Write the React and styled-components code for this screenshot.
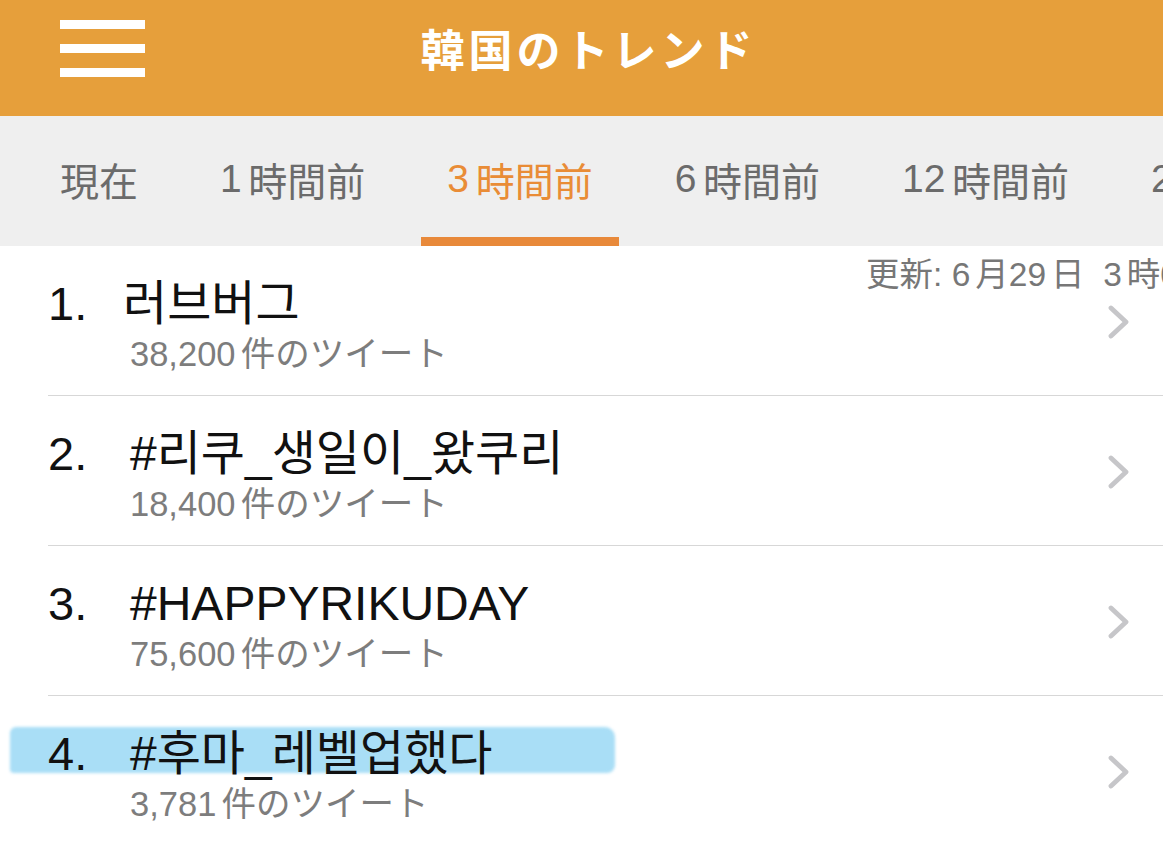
import React from "react";
import styled, { createGlobalStyle } from "styled-components";

const GlobalStyle = createGlobalStyle`
  body {
    margin: 0;
    overflow: hidden;
    background: #fff;
    font-family: "Liberation Sans", "Noto Sans CJK JP", "Noto Sans CJK KR", sans-serif;
  }
`;

// layout ===================================================================

const Page = styled.div`
  width: 1163px;
  height: 842px;
  overflow: hidden;
  background: #fff;
`;

const Header = styled.header`
  height: 116px;
  background: #e69f3b;
  display: grid;
  grid-template-columns: 1fr auto 1fr;
  align-items: center;
`;

const MenuButton = styled.div`
  width: 85px;
  margin-left: 60px;
  margin-top: -19px;
  display: flex;
  flex-direction: column;
  gap: 15px;
`;

const MenuBar = styled.span`
  display: block;
  height: 9px;
  background: #fff;
`;

const Title = styled.h1`
  margin: 0 0 20px 14px;
  color: #fff;
  font-size: 44px;
  font-weight: 700;
  letter-spacing: 4px;
  font-family: "Noto Sans CJK JP", sans-serif;
`;

const TabBar = styled.nav`
  height: 130px;
  background: #efefef;
  display: flex;
  gap: 30px;
  padding-left: 34px;
  white-space: nowrap;
  overflow: hidden;
`;

const Tab = styled.div`
  position: relative;
  display: flex;
  align-items: center;
  padding: 0 26px 4px;
  font-size: 39px;
  color: ${(p) => (p.$active ? "#e98c36" : "#6b6b6b")};

  &::after {
    content: "";
    display: ${(p) => (p.$active ? "block" : "none")};
    position: absolute;
    left: 0;
    right: 0;
    bottom: 0;
    height: 9px;
    background: #e8893a;
  }
`;

// iOS puts a little air between latin digits and the kana/kanji after them
const Num = styled.span`
  margin-right: ${(p) => p.$gap || "0.17em"};
`;

const List = styled.div`
  position: relative;
`;

const Updated = styled.div`
  position: absolute;
  top: 1px;
  left: 866px;
  font-size: 33.5px;
  color: #777;
  white-space: nowrap;
  z-index: 2;
`;

const Row = styled.div`
  position: relative;
  height: 150px;
  margin-left: 48px;
  display: flex;
  align-items: flex-start;
  border-bottom: ${(p) => (p.$last ? "none" : "1.5px solid #d7d7d7")};
  box-sizing: border-box;
`;

const Marker = styled.span`
  position: absolute;
  left: -38px;
  top: 31px;
  width: 605px;
  height: 46px;
  background: #a9def6;
  border-radius: 6px 10px 8px 4px;
  filter: blur(1.5px);
  z-index: 0;
`;

const Entry = styled.div`
  position: relative;
  z-index: 1;
  display: grid;
  grid-template-columns: 82px auto;
  padding-top: 32px;
`;

const Rank = styled.span`
  font-size: 47px;
  line-height: 52px;
  color: #111;
`;

const Info = styled.div`
  display: flex;
  flex-direction: column;
`;

const TrendName = styled.span`
  font-size: 48px;
  line-height: 52px;
  color: #111;
  margin-left: ${(p) => (p.$tight ? "-7px" : "0")};
`;

const Count = styled.span`
  font-size: 34.5px;
  line-height: 48px;
  color: #7d7d7d;
`;

const Chevron = styled.svg`
  align-self: center;
  margin-left: auto;
  margin-right: 32px;
  margin-top: 2px;
  width: 24px;
  height: 34px;
`;

// data =====================================================================

const tabs = [
  ["", "現在"],
  ["1", "時間前"],
  ["3", "時間前"],
  ["6", "時間前"],
  ["12", "時間前"],
  ["24", "時間前"],
];

const trends = [
  { name: "러브버그", count: "38,200", tight: true },
  { name: "#리쿠_생일이_왔쿠리", count: "18,400" },
  { name: "#HAPPYRIKUDAY", count: "75,600" },
  { name: "#후마_레벨업했다", count: "3,781", marked: true },
];

function App() {
  return (
    <Page>
      <GlobalStyle />
      <Header>
        <MenuButton>
          <MenuBar />
          <MenuBar />
          <MenuBar />
        </MenuButton>
        <Title>韓国のトレンド</Title>
        <div />
      </Header>

      <TabBar>
        {tabs.map(([n, label], i) => (
          <Tab key={n + label} $active={i === 2}>
            {n && <Num>{n}</Num>}
            {label}
          </Tab>
        ))}
      </TabBar>

      <List>
        <Updated>
          更新: <Num $gap="0.15em">6</Num>月<Num $gap="0.15em">29</Num>日{"\u00a0 "}<Num $gap="0.15em">3</Num>時<Num $gap="0.15em">00</Num>分
        </Updated>
        {trends.map((t, i) => (
          <Row key={t.name} $last={i === trends.length - 1}>
            {t.marked && <Marker />}
            <Entry>
              <Rank>{i + 1}.</Rank>
              <Info>
                <TrendName $tight={t.tight}>{t.name}</TrendName>
                <Count>
                  <Num $gap="0.15em">{t.count}</Num>件のツイート
                </Count>
              </Info>
            </Entry>
            <Chevron viewBox="0 0 24 34">
              <polyline points="4,3 19,17 4,31" fill="none" stroke="#c6c6c9" strokeWidth="4.8" strokeLinecap="round" strokeLinejoin="round" />
            </Chevron>
          </Row>
        ))}
      </List>
    </Page>
  );
}

export default App;
